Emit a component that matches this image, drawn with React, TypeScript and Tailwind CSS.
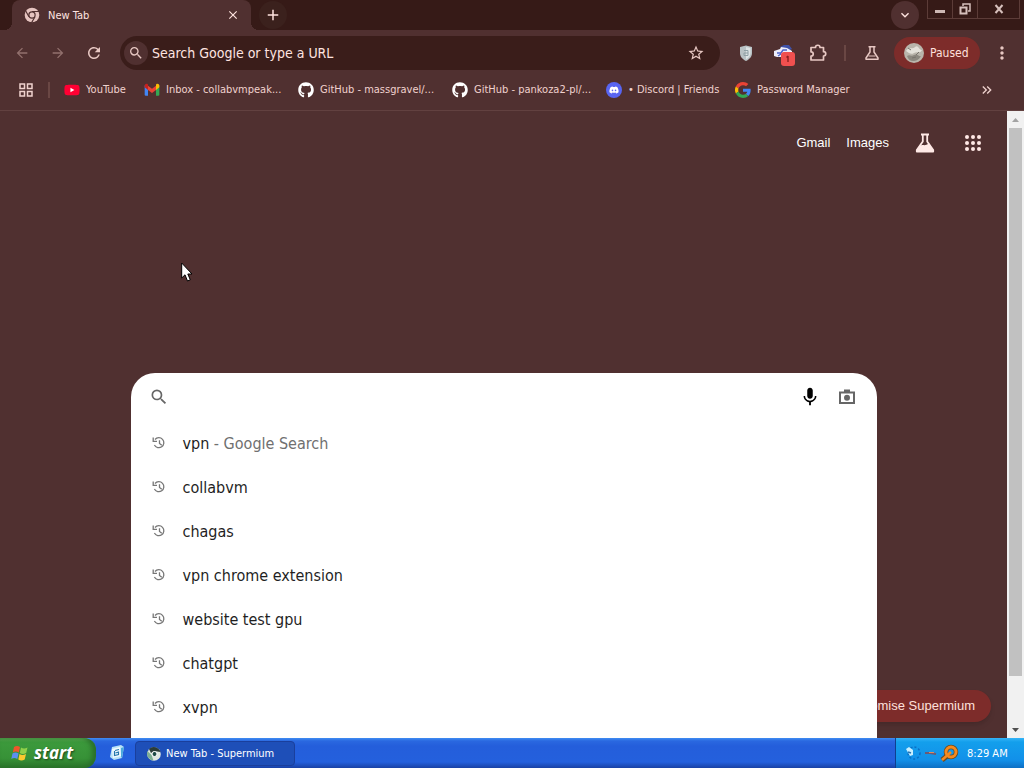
import type { ReactNode } from 'react';
import { FaDiscord, FaGithub, FaYoutube } from 'react-icons/fa';
import {
  MdAdd,
  MdArrowBack,
  MdArrowForward,
  MdClose,
  MdExpandMore,
  MdKeyboardDoubleArrowRight,
  MdMic,
  MdMoreVert,
  MdOutlineGridView,
  MdRefresh,
  MdSearch,
  MdStarBorder,
} from 'react-icons/md';

const GmailIcon = () => (
  <svg viewBox="0 0 24 24" className="size-4">
    <path fill="#4285f4" d="M1 5v14a1.6 1.6 0 0 0 1.6 1.6H6V10z" />
    <path fill="#34a853" d="M18 20.600h3.400A1.600 1.600 0 0 0 23 19V5l-5 5z" />
    <path fill="#ea4335" d="M6 5.500l6 4.500 6-4.500V12l-6 4.500L6 12z" />
    <path fill="#c5221f" d="M1 7V5.500c0-2.400 2.700-3.700 4.500-2.300L6 3.600V12L1 8z" />
    <path fill="#fbbc04" d="M23 7V5.500c0-2.400-2.700-3.700-4.500-2.300l-.5.400V12l5-4z" />
  </svg>
);

const GoogleIcon = () => (
  <svg viewBox="0 0 48 48" className="size-4">
    <path fill="#ea4335" d="M24 9.500c3.540 0 6.710 1.220 9.210 3.600l6.850-6.850C35.900 2.380 30.470 0 24 0 14.620 0 6.510 5.380 2.560 13.220l7.980 6.190C12.430 13.720 17.740 9.500 24 9.500z" />
    <path fill="#4285f4" d="M46.980 24.550c0-1.570-.15-3.090-.38-4.550H24v9.020h12.940c-.58 2.960-2.260 5.480-4.780 7.180l7.730 6c4.510-4.180 7.090-10.360 7.090-17.650z" />
    <path fill="#fbbc05" d="M10.530 28.590a14.500 14.500 0 0 1 0-9.180l-7.980-6.190a24 24 0 0 0 0 21.560z" />
    <path fill="#34a853" d="M24 48c6.480 0 11.930-2.130 15.890-5.810l-7.730-6c-2.150 1.450-4.920 2.300-8.160 2.300-6.260 0-11.570-4.220-13.470-9.910l-7.980 6.190C6.510 42.620 14.620 48 24 48z" />
  </svg>
);

const ChromeIcon = () => (
  <svg viewBox="0 0 16 16" className="size-4">
    <circle cx="8" cy="8" r="7.300" fill="#e6c4c0" />
    <path d="M8 4.500h7M5 9.700L1.600 3.800M11 9.800l-3.500 6" stroke="#503030" strokeWidth="1.200" />
    <circle cx="8" cy="8" r="3.700" fill="#503030" />
    <circle cx="8" cy="8" r="2.500" fill="#e6c4c0" />
  </svg>
);

const ShieldIcon = () => (
  <svg viewBox="0 0 16 18" className="h-[18px] w-4">
    <path d="M8 1.500l6 1.500v6c0 4-3 6.500-6 8-3-1.500-6-4-6-8V3z" fill="#b9c2c5" />
    <path d="M8 3l4.500 1v5c0 3-2 5-4.500 6.400z" fill="#dde3e5" />
    <path d="M6 6.500h4v5H6V9h4" stroke="#8fa0a5" fill="none" />
  </svg>
);

const ProxyIcon = () => (
  <svg viewBox="0 0 24 24" className="size-6">
    <path d="M8 4l4-2h5l3 4-4 2z" fill="#3f51a8" />
    <path d="M2 8l6-2 1-2 6 1 5 3v5l-5 1H5L2 13z" fill="#eeeefb" />
    <path d="M5 10h4l2-3h4M6 13l3-2" stroke="#4d63c9" strokeWidth="1.400" fill="none" />
    <rect x="9" y="9" width="14" height="14" rx="3" fill="#f0504f" />
    <path d="M16 13v6M14.500 14.500L16 13" stroke="#8b2020" strokeWidth="1.400" />
  </svg>
);

const PuzzleIcon = () => (
  <svg viewBox="0 0 18 18" className="size-[18px]" fill="none" stroke="currentColor" strokeWidth="1.700">
    <path d="M2 3.500h4.500c0-3 4.500-3 4.500 0h3.500v4.200c3 0 3 4.300 0 4.300v4H2v-3.800c3 0 3-4.400 0-4.400z" strokeLinejoin="round" />
  </svg>
);

const FlaskIcon = () => (
  <svg viewBox="0 0 16 16" className="size-4" fill="none" stroke="currentColor" strokeWidth="1.500">
    <path d="M4.500 1.800h7M6 2v5L2 13v1.300h12V13l-4-6V2" strokeLinejoin="round" />
    <path d="M4.500 11h7" strokeWidth="1" />
  </svg>
);

const LabsIcon = () => (
  <svg viewBox="0 0 24 24" className="size-6">
    <path d="M8 3.500h8M9.800 4v6.500L3.800 19v1.500h16.400V19l-6-8.500V4" fill="none" stroke="currentColor" strokeWidth="1.800" strokeLinejoin="round" />
    <path d="M7 15c3-2.500 4 1 9-2.500l4 6.500v1.500H4V19z" fill="currentColor" />
  </svg>
);

const AppsIcon = () => (
  <svg viewBox="0 0 24 24" className="size-6" fill="currentColor">
    {[6, 12, 18].map((cy) => [6, 12, 18].map((cx) => <circle key={`${cx}-${cy}`} cx={cx} cy={cy} r="2" />))}
  </svg>
);

const HistoryIcon = () => (
  <svg viewBox="0 0 14 14" className="mr-[17px] size-3.5 text-[#777]" fill="none" stroke="currentColor" strokeWidth="1.300">
    <path d="M3 3.500a5 5 0 1 1-.6 5.500" />
    <path d="M1.200 1.500v3.800h3.800" />
    <path d="M7.500 4.200v3.200l2.300 1.800" />
  </svg>
);

const Avatar = () => (
  <svg viewBox="0 0 20 20" className="size-5">
    <circle cx="10" cy="10" r="10" fill="#b9b5ab" />
    <path d="M2 8c3-5 6-1 9-4s4 3 7 3c-2 4-5 1-8 3s-5 0-8-2z" fill="#e4e2da" />
    <path d="M3 13c3-2 4 1 7-1s5 2 7 1c-2 4-5 5-8 5s-5-2-6-5z" fill="#8c887f" />
    <path d="M4 5l3 2M12 12l3-3M8 15l4-1" stroke="#77736b" />
  </svg>
);

const CameraIcon = () => (
  <svg viewBox="0 0 20 18" className="h-[18px] w-5" fill="none" stroke="#666">
    <path d="M3 4.500h14v10.500H3z" strokeWidth="2" />
    <path d="M7 3h6" strokeWidth="3" />
    <circle cx="10" cy="9.700" r="3" fill="#666" stroke="none" />
  </svg>
);

const WindowsFlag = () => (
  <svg viewBox="0 0 20 20" className="size-5">
    <path d="M4 4c2-1.500 4-1.500 6 0L8.800 9.500c-2-1.500-4-1.500-6 0z" fill="#f0562b" />
    <path d="M11 4.500c2 1.300 4 1.300 6.500 0L16.200 10c-2.200 1.300-4.400 1.300-6.400 0z" fill="#8fd04a" />
    <path d="M2.500 10.500c2-1.500 4-1.500 6 0L7.300 16c-2-1.500-4-1.500-6 0z" fill="#5b8ff0" />
    <path d="M9.500 11c2 1.300 4 1.300 6.500 0l-1.300 5.500c-2.200 1.300-4.400 1.300-6.400 0z" fill="#fbc92f" />
  </svg>
);

const QuickLaunchIcon = () => (
  <svg viewBox="0 0 18 18" className="size-[18px]">
    <path d="M4 3l9-2 3 2-2 11-8 2-4-3z" fill="#b9e3f7" />
    <path d="M4 5l8-2 1 9-8 2z" fill="#f2faff" />
    <path d="M7 6.500l4-1M6.500 7v4.500l4-1V8l-3 1" stroke="#2277ad" fill="none" strokeWidth="1.200" />
    <path d="M13 4l3-1-2 11-1-1z" fill="#4ba9de" />
  </svg>
);

const SupermiumIcon = () => (
  <svg viewBox="0 0 16 16" className="size-4">
    <circle cx="8" cy="8" r="6.800" fill="#dfe7e1" />
    <path d="M3 3a7 7 0 0 1 11.500 3L8 5 5 7z" fill="#2b3c38" />
    <path d="M1.500 5l4 4 2 5.500A7 7 0 0 1 1.500 5z" fill="#7fb094" />
    <circle cx="8.500" cy="8" r="2.500" fill="#1d4a45" stroke="#fff" />
  </svg>
);

const TrayIcons = () => (
  <svg viewBox="0 0 56 18" className="h-[18px] w-14" fill="none">
    <circle cx="10" cy="9" r="6" stroke="#0a6fc5" strokeWidth="1.500" strokeDasharray="2 2" />
    <path d="M2 5l3-2 4 3v5l-3 1z" fill="#c8efff" />
    <path d="M4 8l3 1" stroke="#2573b5" strokeWidth="1.500" />
    <path d="M21 9h5l6 1" stroke="#6c5a75" strokeWidth="2" />
    <path d="M25 8.500h5" stroke="#e08a5f" />
    <path d="M43 12l-5 4" stroke="#6b4a20" strokeWidth="5" />
    <circle cx="47" cy="8" r="5" stroke="#6b4a20" strokeWidth="4.500" />
    <circle cx="47" cy="8" r="5" stroke="#f58a1f" strokeWidth="3" />
    <path d="M47 8l-9 8" stroke="#f58a1f" strokeWidth="2.500" />
  </svg>
);

const bookmarks: { label: string; width: string; icon: ReactNode }[] = [
  {
    label: 'YouTube',
    width: 'w-20',
    icon: (
      <span className="relative flex size-4 items-center justify-center">
        <span className="absolute size-1.5 bg-white" />
        <FaYoutube className="relative size-4 text-[#ff0033]" />
      </span>
    ),
  },
  { label: 'Inbox - collabvmpeak...', width: 'w-[154px]', icon: <GmailIcon /> },
  { label: 'GitHub - massgravel/...', width: 'w-[154px]', icon: <FaGithub className="size-4 text-white" /> },
  { label: 'GitHub - pankoza2-pl/...', width: 'w-[154px]', icon: <FaGithub className="size-4 text-white" /> },
  {
    label: '• Discord | Friends',
    width: 'w-[129px]',
    icon: (
      <span className="flex size-4 items-center justify-center rounded-full bg-[#5865f2]">
        <FaDiscord className="size-2.5 text-white" />
      </span>
    ),
  },
  { label: 'Password Manager', width: 'w-[129px]', icon: <GoogleIcon /> },
];

const suggestions = [
  { text: 'vpn', note: ' - Google Search' },
  { text: 'collabvm' },
  { text: 'chagas' },
  { text: 'vpn chrome extension' },
  { text: 'website test gpu' },
  { text: 'chatgpt' },
  { text: 'xvpn' },
];

const IconButton = ({ label, children }: { label: string; children: ReactNode }) => (
  <button aria-label={label} className="flex h-8 w-9 shrink-0 items-center justify-center">
    {children}
  </button>
);

const TabStrip = () => (
  <div className="flex h-[30px] shrink-0 bg-[#361a17] pl-3">
    <div className="relative flex w-[239px] items-center rounded-t-lg bg-[#503030] pr-2 pl-3">
      <span className="absolute bottom-0 -left-2 size-2 bg-[radial-gradient(circle_at_0_0,#361a17_8px,#503030_8px)]" />
      <span className="absolute -right-2 bottom-0 size-2 bg-[radial-gradient(circle_at_100%_0,#361a17_8px,#503030_8px)]" />
      <ChromeIcon />
      <span className="ml-2 flex-1 pt-0.5 text-[11px] text-[#ffe4e0]">New Tab</span>
      <button aria-label="Close tab" className="flex size-5 items-center justify-center text-[#ffe4e0]">
        <MdClose className="size-3.5" />
      </button>
    </div>
    <button aria-label="New tab" className="mt-px ml-2 flex size-7 items-center justify-center rounded-full bg-[#3b211d] text-[#ffe4e0]">
      <MdAdd className="size-[18px]" />
    </button>
    <div className="flex-1" />
    <button aria-label="Search tabs" className="mt-px mr-2 flex size-7 items-center justify-center rounded-full bg-[#503030] text-[#ffe4e0]">
      <MdExpandMore className="size-4" />
    </button>
    <div className="mr-1 flex h-[19px] w-[93px] divide-x divide-[#5c3c38] border border-t-0 border-[#5c3c38] text-[#d6c0bc]">
      <button aria-label="Minimize" className="flex w-[25px] items-center justify-center">
        <span className="mt-1 h-[3px] w-2.5 bg-[#cdb8b4]" />
      </button>
      <button aria-label="Restore" className="flex w-[25px] items-center justify-center">
        <svg viewBox="0 0 12 12" className="size-3" fill="none" stroke="currentColor" strokeWidth="2">
          <path d="M4 3V1h7v7H9" strokeWidth="1.500" />
          <path d="M1.500 4.500h6v6h-6z" />
        </svg>
      </button>
      <button aria-label="Close" className="flex flex-1 items-center justify-center">
        <svg viewBox="0 0 10 10" className="size-2.5" stroke="currentColor" strokeWidth="2">
          <path d="M1.500 1l7 8M8.500 1l-7 8" />
        </svg>
      </button>
    </div>
  </div>
);

const Toolbar = () => (
  <div className="flex h-[46px] shrink-0 items-center px-1 text-[#e8c8c3]">
    <IconButton label="Back"><MdArrowBack className="size-4 text-[#92706d]" /></IconButton>
    <IconButton label="Forward"><MdArrowForward className="size-4 text-[#92706d]" /></IconButton>
    <IconButton label="Reload"><MdRefresh className="size-[18px]" /></IconButton>
    <div className="ml-2 flex h-[34px] flex-1 items-center rounded-full bg-[#3a1d1a] pl-1">
      <span className="flex size-6 items-center justify-center rounded-full bg-[#503030]">
        <MdSearch className="size-4" />
      </span>
      <input
        aria-label="Address and search bar"
        placeholder="Search Google or type a URL"
        className="ml-1 min-w-0 flex-1 bg-transparent text-[14px] text-[#ffe4e0] outline-none placeholder:text-[#ffe4e0]"
      />
      <button aria-label="Bookmark this tab" className="mr-3.5 flex size-5 items-center justify-center">
        <MdStarBorder className="size-[18px]" />
      </button>
    </div>
    <div className="ml-2 flex items-center">
      <IconButton label="Ad blocker"><ShieldIcon /></IconButton>
      <IconButton label="Proxy"><span className="pt-1 pl-1"><ProxyIcon /></span></IconButton>
      <IconButton label="Extensions"><PuzzleIcon /></IconButton>
      <span className="mx-2 h-4 w-0.5 bg-[#6a4744]" />
      <IconButton label="Experiments"><FlaskIcon /></IconButton>
      <button className="ml-1 flex h-8 w-[86px] items-center gap-1.5 rounded-full bg-[#7d2c2a] pl-2.5 text-[12px] text-[#ffe0dc]">
        <Avatar />
        Paused
      </button>
      <span className="w-1" />
      <IconButton label="Menu"><MdMoreVert className="size-5" /></IconButton>
    </div>
  </div>
);

const BookmarksBar = () => (
  <div className="flex h-[35px] shrink-0 items-center border-b border-[#624140] pb-1.5 pl-2 text-[11px] text-[#f0d2ce]">
    <IconButton label="Tab groups"><MdOutlineGridView className="size-[18px]" /></IconButton>
    <span className="ml-1 h-4 w-0.5 bg-[#6a4744]" />
    <nav className="ml-3.5 flex flex-1">
      {bookmarks.map((bookmark) => (
        <a key={bookmark.label} href="#" className={`flex shrink-0 items-center gap-1.5 whitespace-nowrap ${bookmark.width}`}>
          {bookmark.icon}
          {bookmark.label}
        </a>
      ))}
    </nav>
    <button aria-label="More bookmarks" className="mr-7 flex size-[18px] items-center justify-center">
      <MdKeyboardDoubleArrowRight className="size-4" />
    </button>
  </div>
);

const NewTabPage = () => (
  <main className="relative min-w-0 flex-1 overflow-hidden">
    <header className="flex h-16 items-center justify-end pr-[22px] font-['Liberation_Sans',sans-serif] text-[13px] font-medium text-white">
      <a href="#" className="mr-4">Gmail</a>
      <a href="#" className="mr-6">Images</a>
      <button aria-label="Search labs" className="mr-6 text-[#ffe9e6]"><LabsIcon /></button>
      <button aria-label="Google apps" className="text-[#ffe9e6]"><AppsIcon /></button>
    </header>
    <button className="absolute right-4 bottom-4 h-8 w-[180px] rounded-full bg-[#7d2c2a] pr-4 text-right font-['Liberation_Sans',sans-serif] text-[13px] whitespace-nowrap text-[#ffe0dc] shadow-md">
      Customise Supermium
    </button>
    <section className="relative mx-auto mt-[198px] h-[420px] w-[746px] max-w-full rounded-t-3xl bg-white">
      <div className="flex h-12 items-center pr-5 pl-[18px] text-[#666]">
        <MdSearch className="size-5" />
        <input aria-label="Search" className="mx-3 min-w-0 flex-1 outline-none" />
        <button aria-label="Voice search" className="mr-4 text-black"><MdMic className="size-[22px]" /></button>
        <button aria-label="Search by image"><CameraIcon /></button>
      </div>
      <ul>
        {suggestions.map((item) => (
          <li key={item.text} className="flex h-11 items-center pl-[21px] text-[16px] text-[#1f1f1f]">
            <HistoryIcon />
            <span className="pt-0.5">
              {item.text}
              {item.note && <span className="text-[#707070]">{item.note}</span>}
            </span>
          </li>
        ))}
      </ul>
    </section>
    <svg viewBox="0 0 12 20" className="absolute top-[151px] left-[181px] h-5 w-3">
      <path d="M.7 1v15l3.300-3.200L6.500 19l2.800-1.200L6.800 12H11z" fill="#fff" stroke="#000" />
    </svg>
  </main>
);

const ScrollBar = () => (
  <div className="flex w-[17px] shrink-0 flex-col items-center bg-[#f1f1f1]">
    <svg viewBox="0 0 17 17" className="size-[17px]"><path d="M5 11l3.500-4 3.500 4z" fill="#a3a3a3" /></svg>
    <div className="w-[13px] flex-1 bg-[#c1c1c1]" />
    <div className="h-[45px]" />
    <svg viewBox="0 0 17 17" className="size-[17px]"><path d="M5 7l3.500 4L12 7z" fill="#505050" /></svg>
  </div>
);

const TaskBar = () => (
  <footer className="flex h-[30px] shrink-0 bg-[linear-gradient(#3f8cf3_0,#2a68e0_3px,#245edb_8px,#2460dd_24px,#1941a5_30px)] text-[11px] text-white">
    <button className="flex w-24 items-center gap-1 rounded-r-xl bg-[linear-gradient(#5eac56_0,#3c9a3c_4px,#379237_20px,#2a742a_30px)] pl-2.5 font-['Open_Sans',sans-serif] text-[17px] font-bold italic shadow-[inset_-4px_0_5px_#2a6f2a] [text-shadow:1px_1px_2px_#1b451b]">
      <WindowsFlag />
      start
    </button>
    <button aria-label="Quick launch" className="ml-3 flex w-5 items-center"><QuickLaunchIcon /></button>
    <button className="mt-[3px] ml-[7px] flex h-[25px] w-40 items-center gap-1 rounded-sm border border-[#1a3f9c] bg-[#1e4fb8] pl-2.5">
      <SupermiumIcon />
      <span className="pt-0.5">New Tab - Supermium</span>
    </button>
    <div className="flex-1" />
    <div className="flex w-[129px] items-center border-l border-[#0f3f8f] bg-[linear-gradient(#35b4f8_0,#139fec_4px,#1290e9_22px,#0d6fc4_30px)] pl-2">
      <TrayIcons />
      <time className="ml-[7px] pt-0.5 whitespace-nowrap">8:29 AM</time>
    </div>
  </footer>
);

const App = () => {
  return (
    <div className="flex h-screen flex-col overflow-hidden bg-[#503030] font-['DejaVu_Sans_Condensed','Noto_Sans',sans-serif]">
      <TabStrip />
      <Toolbar />
      <BookmarksBar />
      <div className="flex min-h-0 flex-1">
        <NewTabPage />
        <ScrollBar />
      </div>
      <TaskBar />
    </div>
  );
};

export default App;
